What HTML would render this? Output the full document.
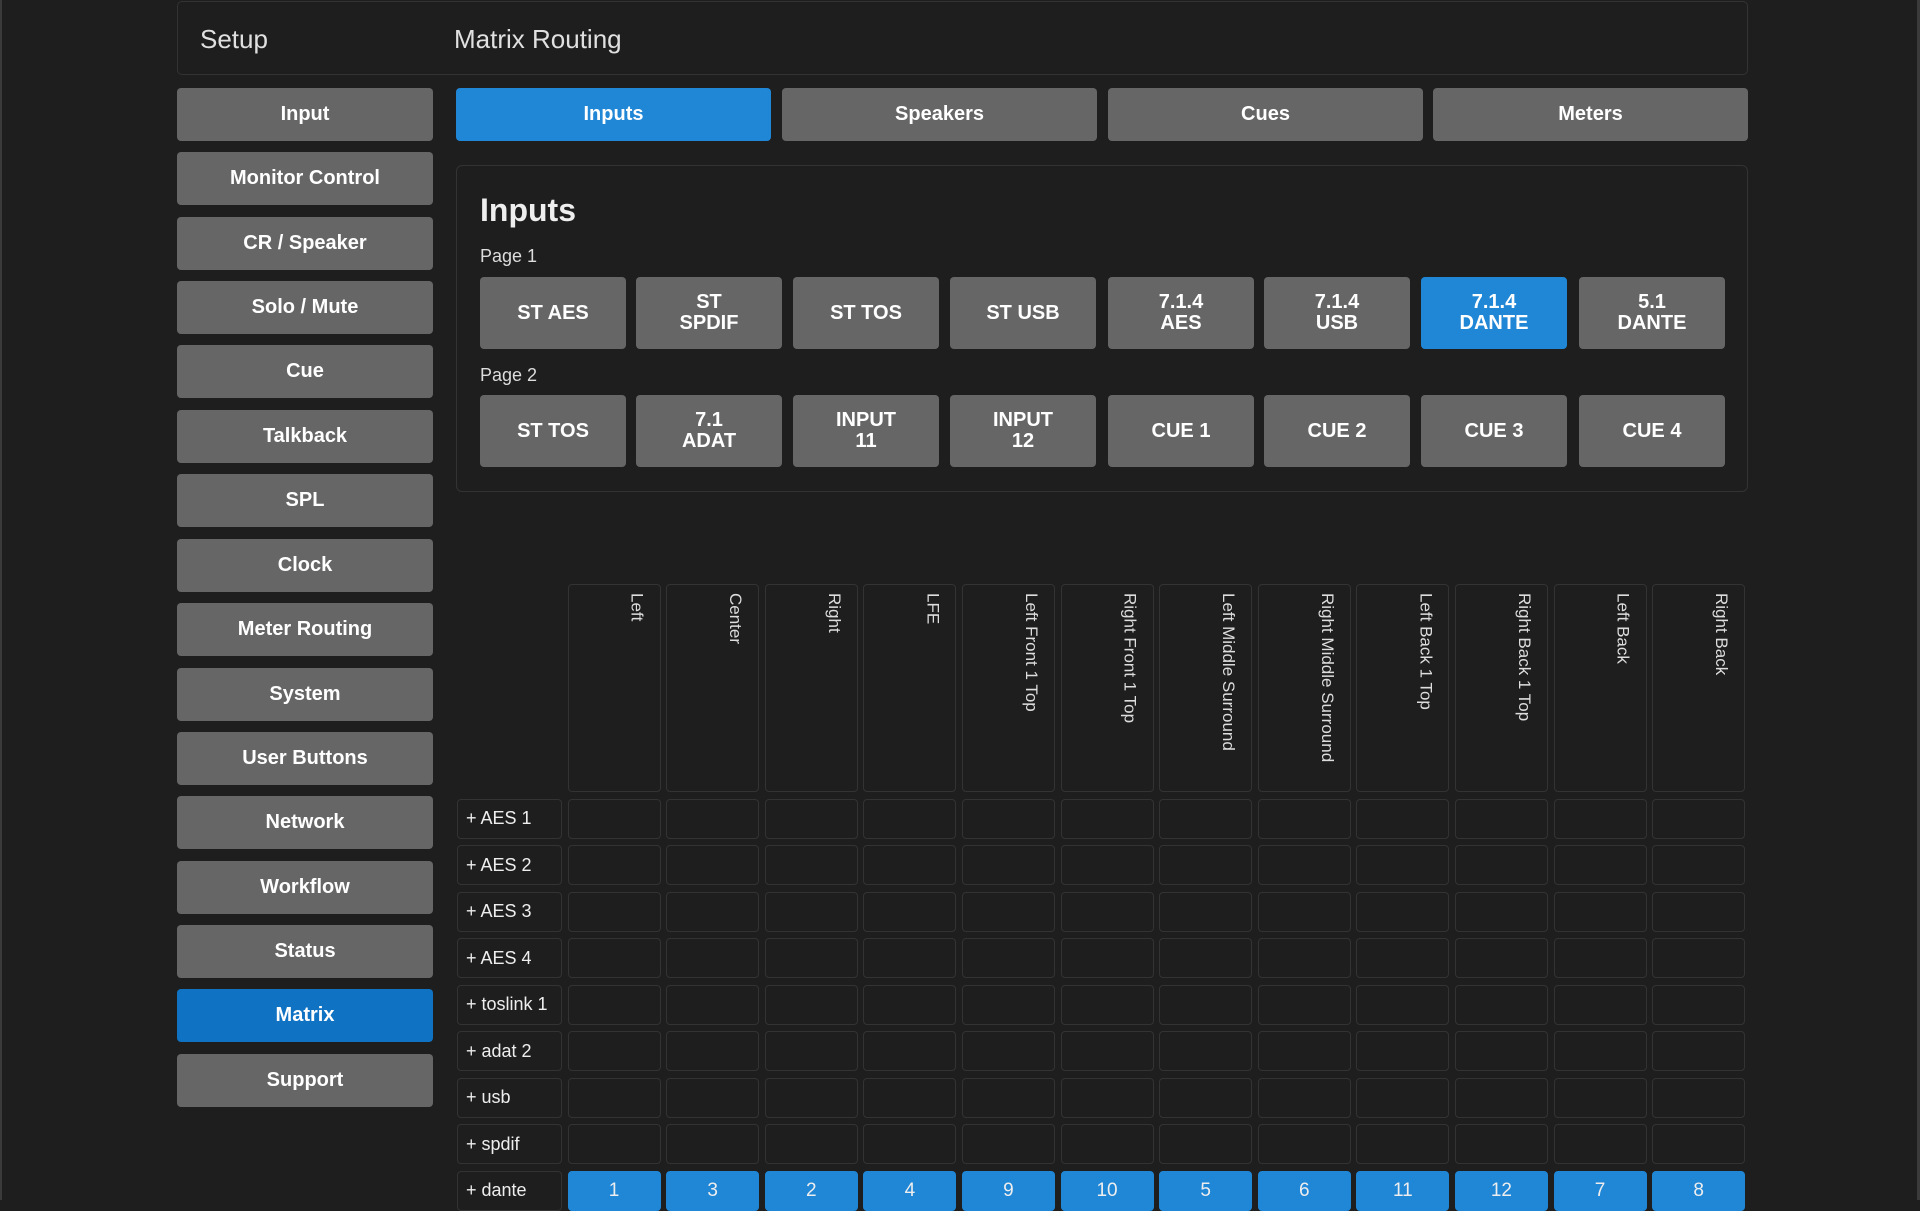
<!DOCTYPE html>
<html><head><meta charset="utf-8"><style>
*{box-sizing:border-box;margin:0;padding:0}
body{width:1920px;height:1200px;background:#1e1e1e;font-family:"Liberation Sans",sans-serif;color:#e8e8e8;position:relative;overflow:hidden;border-left:2px solid #3a3a3a;border-right:3px solid #3a3a3a}
.hdr{position:absolute;left:175px;top:1px;width:1571px;height:74px;border:1px solid #333;border-radius:5px}
.hdr span{position:absolute;top:22px;font-size:26px;color:#e0e0e0}
.sb{position:absolute;left:175px;width:256px;height:53px;background:#666;border-radius:4px;color:#fff;font-weight:bold;font-size:20px;display:flex;align-items:center;justify-content:center}
.sb.on{background:#0f72c2}
.tab{position:absolute;top:88px;width:315px;height:53px;background:#666;border-radius:4px;color:#fff;font-weight:bold;font-size:20px;display:flex;align-items:center;justify-content:center}
.tab.on{background:#2086d6}
.panel{position:absolute;left:454px;top:165px;width:1292px;height:327px;border:1px solid #333;border-radius:6px}
.h{position:absolute;left:478px;top:192px;font-size:32px;font-weight:bold;color:#eee}
.pl{position:absolute;left:478px;font-size:18px;color:#ddd}
.b{position:absolute;width:146px;height:72px;background:#666;border-radius:4px;color:#fff;font-weight:bold;font-size:20px;line-height:21px;display:flex;align-items:center;justify-content:center;text-align:center}
.b.on{background:#2086d6}
.grid{position:absolute;left:455px;top:584px;display:grid;grid-template-columns:105px repeat(12,93px);column-gap:5.6px;row-gap:6.5px;grid-template-rows:208px repeat(9,40px)}
.grid div{border:1px solid #333;border-radius:4px}
.grid .e{border:none}
.ch{writing-mode:vertical-rl;font-size:17px;color:#ddd;padding:8px 12px 0 0;line-height:22px}
.rl{font-size:18px;color:#eee;padding-left:8px;display:flex;align-items:center}
.grid .d{background:#2086d6;border-color:#2086d6;color:#eee;font-size:19px;display:flex;align-items:center;justify-content:center}
</style></head><body>
<div class="hdr"><span style="left:22px">Setup</span><span style="left:276px">Matrix Routing</span></div>
<div class="sb" style="top:88px">Input</div>
<div class="sb" style="top:152px">Monitor Control</div>
<div class="sb" style="top:217px">CR / Speaker</div>
<div class="sb" style="top:281px">Solo / Mute</div>
<div class="sb" style="top:345px">Cue</div>
<div class="sb" style="top:410px">Talkback</div>
<div class="sb" style="top:474px">SPL</div>
<div class="sb" style="top:539px">Clock</div>
<div class="sb" style="top:603px">Meter Routing</div>
<div class="sb" style="top:668px">System</div>
<div class="sb" style="top:732px">User Buttons</div>
<div class="sb" style="top:796px">Network</div>
<div class="sb" style="top:861px">Workflow</div>
<div class="sb" style="top:925px">Status</div>
<div class="sb on" style="top:989px">Matrix</div>
<div class="sb" style="top:1054px">Support</div>
<div class="tab on" style="left:454px">Inputs</div>
<div class="tab" style="left:780px">Speakers</div>
<div class="tab" style="left:1106px">Cues</div>
<div class="tab" style="left:1431px">Meters</div>
<div class="panel"></div>
<div class="h">Inputs</div>
<div class="pl" style="top:246px">Page 1</div>
<div class="pl" style="top:365px">Page 2</div>
<div class="b" style="left:478px;top:277px">ST AES</div>
<div class="b" style="left:634px;top:277px">ST<br>SPDIF</div>
<div class="b" style="left:791px;top:277px">ST TOS</div>
<div class="b" style="left:948px;top:277px">ST USB</div>
<div class="b" style="left:1106px;top:277px">7.1.4<br>AES</div>
<div class="b" style="left:1262px;top:277px">7.1.4<br>USB</div>
<div class="b on" style="left:1419px;top:277px">7.1.4<br>DANTE</div>
<div class="b" style="left:1577px;top:277px">5.1<br>DANTE</div>
<div class="b" style="left:478px;top:395px">ST TOS</div>
<div class="b" style="left:634px;top:395px">7.1<br>ADAT</div>
<div class="b" style="left:791px;top:395px">INPUT<br>11</div>
<div class="b" style="left:948px;top:395px">INPUT<br>12</div>
<div class="b" style="left:1106px;top:395px">CUE 1</div>
<div class="b" style="left:1262px;top:395px">CUE 2</div>
<div class="b" style="left:1419px;top:395px">CUE 3</div>
<div class="b" style="left:1577px;top:395px">CUE 4</div>
<div class="grid">
<div class="e"></div>
<div class="ch">Left</div><div class="ch">Center</div><div class="ch">Right</div><div class="ch">LFE</div><div class="ch">Left Front 1 Top</div><div class="ch">Right Front 1 Top</div><div class="ch">Left Middle Surround</div><div class="ch">Right Middle Surround</div><div class="ch">Left Back 1 Top</div><div class="ch">Right Back 1 Top</div><div class="ch">Left Back</div><div class="ch">Right Back</div>
<div class="rl">+ AES 1</div><div></div><div></div><div></div><div></div><div></div><div></div><div></div><div></div><div></div><div></div><div></div><div></div>
<div class="rl">+ AES 2</div><div></div><div></div><div></div><div></div><div></div><div></div><div></div><div></div><div></div><div></div><div></div><div></div>
<div class="rl">+ AES 3</div><div></div><div></div><div></div><div></div><div></div><div></div><div></div><div></div><div></div><div></div><div></div><div></div>
<div class="rl">+ AES 4</div><div></div><div></div><div></div><div></div><div></div><div></div><div></div><div></div><div></div><div></div><div></div><div></div>
<div class="rl">+ toslink 1</div><div></div><div></div><div></div><div></div><div></div><div></div><div></div><div></div><div></div><div></div><div></div><div></div>
<div class="rl">+ adat 2</div><div></div><div></div><div></div><div></div><div></div><div></div><div></div><div></div><div></div><div></div><div></div><div></div>
<div class="rl">+ usb</div><div></div><div></div><div></div><div></div><div></div><div></div><div></div><div></div><div></div><div></div><div></div><div></div>
<div class="rl">+ spdif</div><div></div><div></div><div></div><div></div><div></div><div></div><div></div><div></div><div></div><div></div><div></div><div></div>
<div class="rl">+ dante</div><div class="d">1</div><div class="d">3</div><div class="d">2</div><div class="d">4</div><div class="d">9</div><div class="d">10</div><div class="d">5</div><div class="d">6</div><div class="d">11</div><div class="d">12</div><div class="d">7</div><div class="d">8</div>
</div>
</body></html>
